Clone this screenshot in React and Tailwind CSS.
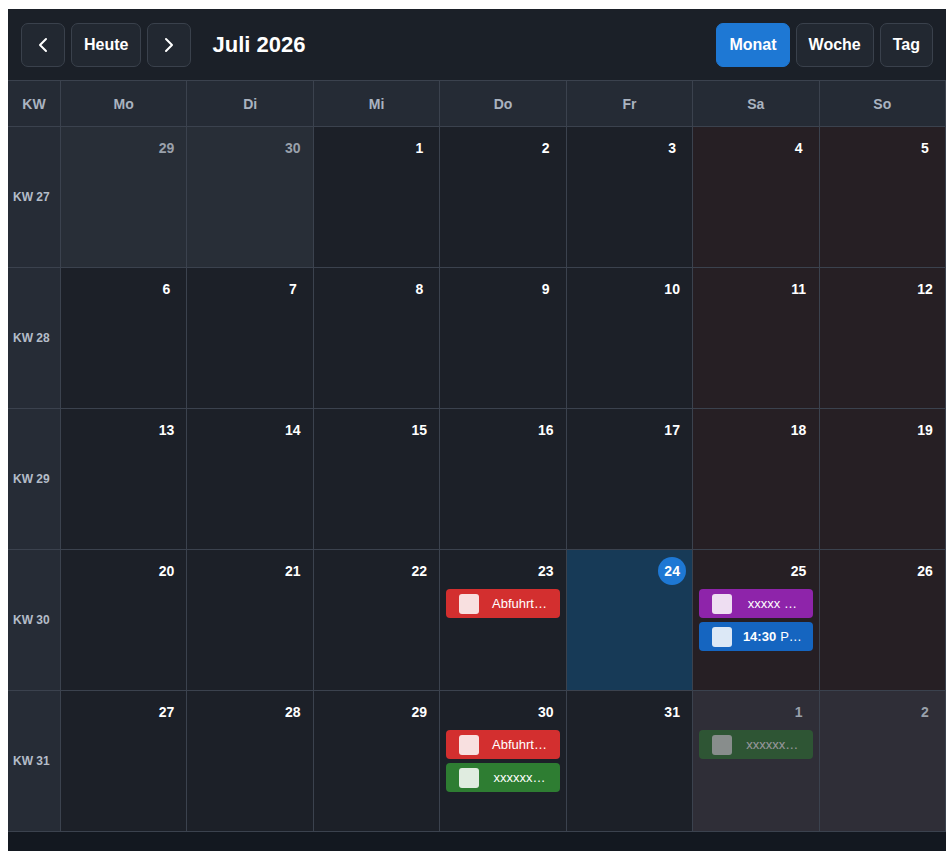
import React from 'react';
import { ChevronLeft, ChevronRight } from 'lucide-react';

const DAYS = ['Mo', 'Di', 'Mi', 'Do', 'Fr', 'Sa', 'So'];

const COLORS = {
  red: 'bg-[#d32f2f]',
  green: 'bg-[#2e7d32]',
  purple: 'bg-[#8e24aa]',
  blue: 'bg-[#1565c0]',
};

const events = {
  '7-23': [{ title: 'Abfuhrt…', color: 'red' }],
  '7-25': [
    { title: 'xxxxx …', color: 'purple' },
    { time: '14:30', title: 'P…', color: 'blue' },
  ],
  '7-30': [
    { title: 'Abfuhrt…', color: 'red' },
    { title: 'xxxxxx…', color: 'green' },
  ],
  '8-1': [{ title: 'xxxxxx…', color: 'green' }],
};

const weeks = [
  { kw: 27, days: [[6, 29], [6, 30], [7, 1], [7, 2], [7, 3], [7, 4], [7, 5]] },
  { kw: 28, days: [[7, 6], [7, 7], [7, 8], [7, 9], [7, 10], [7, 11], [7, 12]] },
  { kw: 29, days: [[7, 13], [7, 14], [7, 15], [7, 16], [7, 17], [7, 18], [7, 19]] },
  { kw: 30, days: [[7, 20], [7, 21], [7, 22], [7, 23], [7, 24], [7, 25], [7, 26]] },
  { kw: 31, days: [[7, 27], [7, 28], [7, 29], [7, 30], [7, 31], [8, 1], [8, 2]] },
];

const EventPill = ({ ev }) => (
  <div className={`flex items-center h-[29px] rounded-[4px] pl-[13px] ${COLORS[ev.color]}`}>
    <span className="w-5 h-5 shrink-0 rounded-[3px] bg-white/85" />
    <span className="flex-1 min-w-0 whitespace-nowrap text-center text-[13px] text-white">
      {ev.time && <b className="font-bold mr-1">{ev.time}</b>}
      {ev.title}
    </span>
  </div>
);

const DayCell = ({ month, day, col }) => {
  const outside = month !== 7;
  const weekend = col >= 5;
  const today = month === 7 && day === 24;
  const list = events[`${month}-${day}`] || [];

  let bg = 'bg-[#1c2028]';
  if (today) bg = 'bg-[#173a57]';
  else if (outside && weekend) bg = 'bg-[#2f2e37]';
  else if (outside) bg = 'bg-[#282e37]';
  else if (weekend) bg = 'bg-[#261f24]';

  return (
    <div className={`min-w-0 h-[141px] border-r border-b border-[#3b424e] ${bg} flex flex-col px-1.5 pt-[7px]`}>
      <div className="flex justify-end">
        {today ? (
          <span className="w-7 h-7 rounded-full bg-[#1e78d4] text-white text-sm font-bold flex items-center justify-center">
            {day}
          </span>
        ) : (
          <span className={`h-7 min-w-7 flex items-center justify-center text-sm font-bold ${outside ? 'text-[#9aa1ab]' : 'text-white'}`}>
            {day}
          </span>
        )}
      </div>
      <div className={`mt-1 flex flex-col gap-1 ${outside ? 'opacity-50' : ''}`}>
        {list.map((ev, i) => (
          <EventPill key={i} ev={ev} />
        ))}
      </div>
    </div>
  );
};

const HeaderButton = ({ children, active, square }) => (
  <button
    className={`h-11 rounded-[7px] border text-base font-bold text-white flex items-center justify-center ${
      square ? 'w-11' : 'px-3'
    } ${active ? 'bg-[#1e78d4] border-[#1e78d4]' : 'bg-[#222831] border-[#3a414c]'}`}
  >
    {children}
  </button>
);

export default function App() {
  return (
    <div className="min-h-screen bg-white pl-2 pr-[6px] pt-[9px]" style={{ fontFamily: '"Liberation Sans", Arial, sans-serif' }}>
      <div className="bg-[#131820] pb-[19px]">
        {/* Toolbar */}
        <div className="h-[71px] bg-[#1b2028] flex items-center justify-between pl-[13px] pr-[13px]">
          <div className="flex items-center gap-1.5">
            <HeaderButton square>
              <ChevronLeft className="w-6 h-6" strokeWidth={2} />
            </HeaderButton>
            <HeaderButton>Heute</HeaderButton>
            <HeaderButton square>
              <ChevronRight className="w-6 h-6" strokeWidth={2} />
            </HeaderButton>
            <h1 className="ml-[15px] text-[22px] font-bold text-white">Juli 2026</h1>
          </div>
          <div className="flex items-center gap-1.5">
            <HeaderButton active>Monat</HeaderButton>
            <HeaderButton>Woche</HeaderButton>
            <HeaderButton>Tag</HeaderButton>
          </div>
        </div>

        {/* Grid */}
        <div className="grid grid-cols-[53px_repeat(7,minmax(0,1fr))] border-t border-[#3b424e]">
          <div className="h-[46px] bg-[#252b35] border-r border-b border-[#3b424e] flex items-center justify-center text-sm font-bold text-[#aab3c0]">
            KW
          </div>
          {DAYS.map((d) => (
            <div
              key={d}
              className="h-[46px] bg-[#252b35] border-r border-b border-[#3b424e] flex items-center justify-center text-sm font-bold text-[#aab3c0]"
            >
              {d}
            </div>
          ))}

          {weeks.map((w) => (
            <React.Fragment key={w.kw}>
              <div className="h-[141px] bg-[#262c36] border-r border-b border-[#3b424e] flex items-center pl-[5px] text-xs font-bold text-[#b4bcc8]">
                KW {w.kw}
              </div>
              {w.days.map(([m, d], i) => (
                <DayCell key={`${m}-${d}`} month={m} day={d} col={i} />
              ))}
            </React.Fragment>
          ))}
        </div>
      </div>
    </div>
  );
}
